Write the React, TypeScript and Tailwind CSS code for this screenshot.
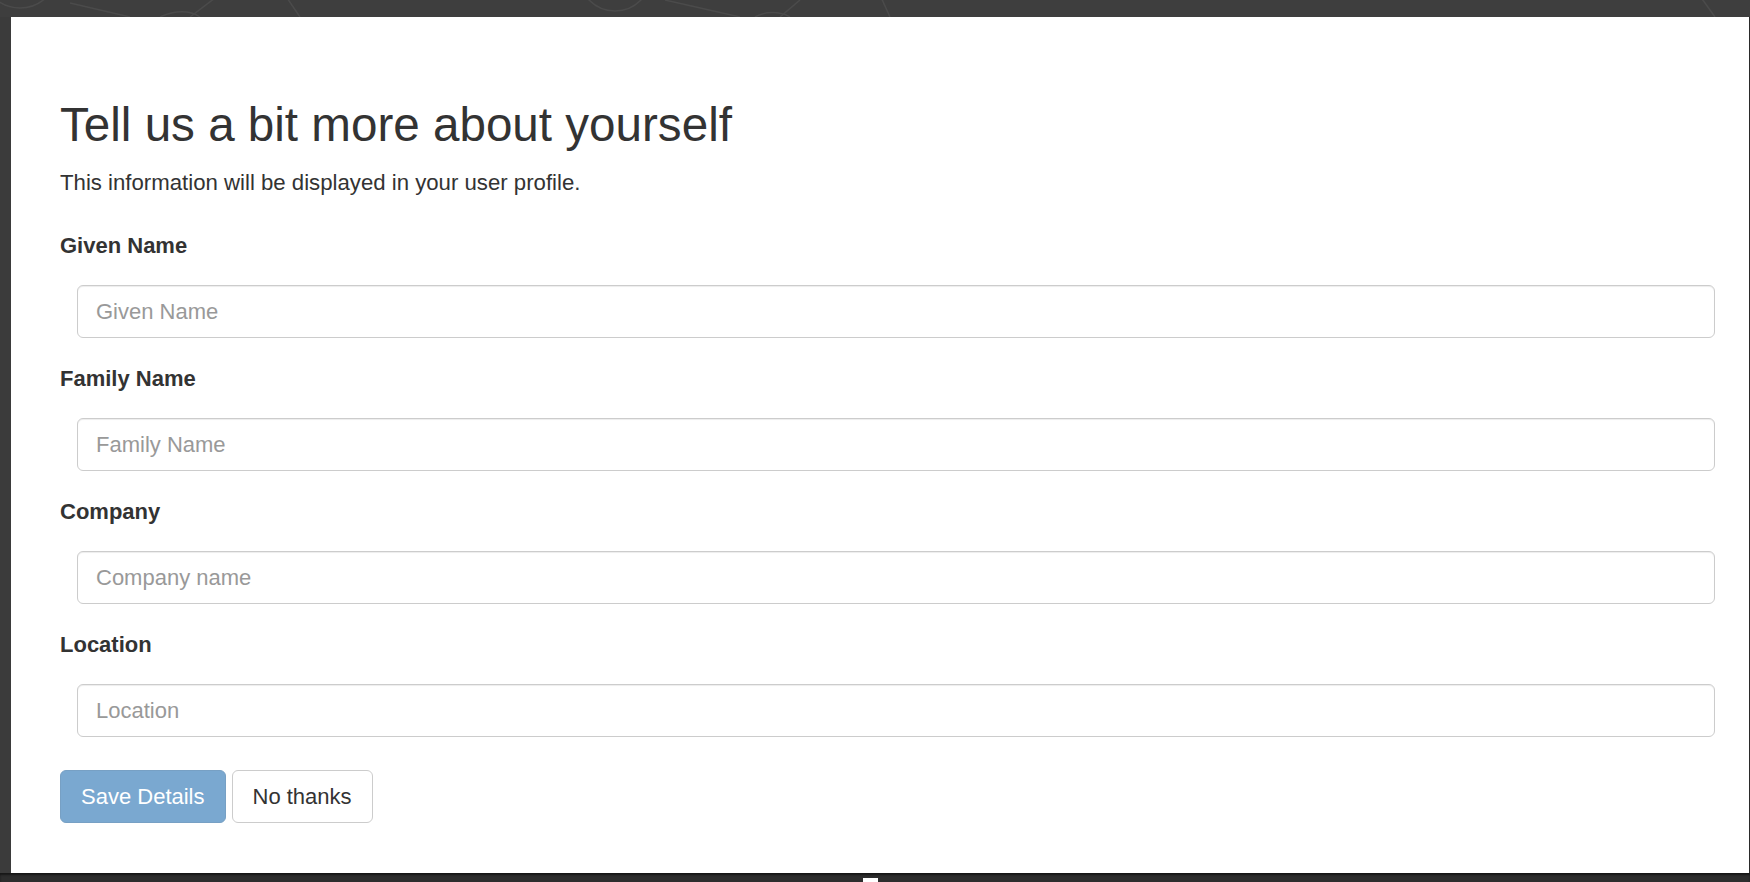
import { FC } from "react";

interface FieldProps {
  label: string;
  placeholder: string;
}

const Field: FC<FieldProps> = ({ label, placeholder }) => {
  return (
    <div className="flex flex-col">
      <label className="text-[22px] leading-[31px] font-bold text-[#333] mb-[24px]">
        {label}
      </label>
      <div className="pl-[17px]">
        <input
          type="text"
          placeholder={placeholder}
          className="w-full h-[53px] px-[18px] text-[22px] text-[#555] bg-white border border-solid
            border-[#ccc] rounded-[6px] outline-none shadow-[inset_0_1px_1px_rgba(0,0,0,0.075)]
            placeholder:text-[#999]"
        />
      </div>
    </div>
  );
};

const TopPattern: FC = () => (
  <svg width="1750" height="17" viewBox="0 0 1750 17" className="block">
    <g fill="none" stroke="#4b4b4b" strokeWidth="1.5">
      <circle cx="20" cy="-30" r="38" />
      <path d="M70 3 L130 17" />
      <path d="M160 17 C 175 10, 190 10, 200 17" />
      <path d="M190 17 L215 -2" />
      <path d="M285 -5 L300 17" />
      <circle cx="615" cy="-25" r="36" />
      <path d="M665 0 L740 17" />
      <path d="M755 17 C 765 11, 780 11, 790 17" />
      <path d="M780 17 L800 0" />
      <path d="M880 -5 L890 17" />
      <path d="M1700 -4 L1715 17" />
    </g>
  </svg>
);

export default function App() {
  return (
    <div className="w-[1750px] h-[882px] bg-[#3e3e3e] flex flex-col overflow-hidden font-['Liberation_Sans',Arial,sans-serif]">
      <TopPattern />
      <div className="flex">
        <div className="w-[11px] bg-[#3b3b3b]" />
        <div className="w-[1738px] bg-white pl-[49px] pr-[34px] pt-[82px] pb-[50px]">
          <h1 className="text-[47.6px] leading-[52px] font-normal text-[#333]">
            Tell us a bit more about yourself
          </h1>
          <p className="text-[22.2px] leading-[31px] text-[#333] mt-[16px] mb-[32px]">
            This information will be displayed in your user profile.
          </p>

          <div className="flex flex-col gap-[25px]">
            <Field label="Given Name" placeholder="Given Name" />
            <Field label="Family Name" placeholder="Family Name" />
            <Field label="Company" placeholder="Company name" />
            <Field label="Location" placeholder="Location" />
          </div>

          <div className="flex items-center gap-[6px] mt-[33px]">
            <button
              type="button"
              disabled
              className="h-[53px] px-[20px] text-[22px] text-white bg-[#7aa8d0] border border-solid
                border-[#77a0c4] rounded-[6px]"
            >
              Save Details
            </button>
            <button
              type="button"
              className="h-[53px] px-[20px] text-[22px] text-[#333] bg-white border border-solid
                border-[#ccc] rounded-[6px]"
            >
              No thanks
            </button>
          </div>
        </div>
        <div className="w-[1px] bg-[#2a2a2a]" />
      </div>
      <div className="flex-1 bg-[#2d2d2d] shadow-[inset_0_2px_2px_rgba(0,0,0,0.5)]">
        <div className="ml-[863px] mt-[5px] w-[15px] h-[4px] bg-white" />
      </div>
    </div>
  );
}
